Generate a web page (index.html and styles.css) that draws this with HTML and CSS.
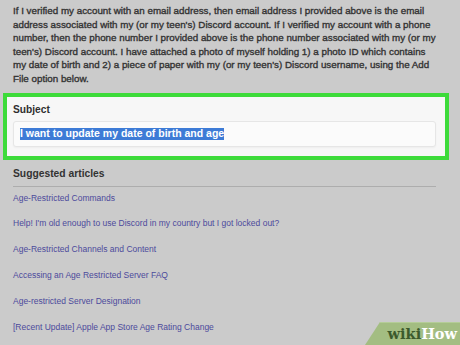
FILE: index.html
```html
<!DOCTYPE html>
<html lang="en">
<head>
    <meta charset="UTF-8">
    <title>Submit a request</title>
    <link rel="stylesheet" href="styles.css">
</head>
<body>
    <div class="page">
        <p class="consent">If I verified my account with an email address, then email address I provided above is the email address associated with my (or my teen's) Discord account. If I verified my account with a phone number, then the phone number I provided above is the phone number associated with my (or my teen's) Discord account. I have attached a photo of myself holding 1) a photo ID which contains my date of birth and 2) a piece of paper with my (or my teen's) Discord username, using the Add File option below.</p>

        <div class="highlight">
            <label class="field-label">Subject</label>
            <div class="input"><span class="selected">I want to update my date of birth and age</span></div>
        </div>

        <div class="suggested">
            <h2>Suggested articles</h2>
            <ul class="articles">
                <li><a href="#">Age-Restricted Commands</a></li>
                <li><a href="#">Help! I'm old enough to use Discord in my country but I got locked out?</a></li>
                <li><a href="#">Age-Restricted Channels and Content</a></li>
                <li><a href="#">Accessing an Age Restricted Server FAQ</a></li>
                <li><a href="#">Age-restricted Server Designation</a></li>
                <li><a href="#">[Recent Update] Apple App Store Age Rating Change</a></li>
            </ul>
        </div>
    </div>

    <div class="wikihow"><span class="wiki">wiki</span><span class="how">How</span></div>
</body>
</html>
```

FILE: styles.css
```css
html, body {
    margin: 0;
    height: 100%;
}
body {
    background-color: #cbcbcb;
    font-family: "Liberation Sans", Arial, sans-serif;
    color: #333;
    overflow: hidden;
    position: relative;
}
.page {
    padding-top: 4px;
}
.consent {
    margin: 0 21px 0 13px;
    font-size: 9.8px;
    line-height: 13.6px;
    color: #333;
    -webkit-text-stroke: 0.35px #333;
}
.highlight {
    margin: 7px 11px 0 3px;
    border: 4px solid #3ddb3a;
    background: #f7f7f7;
    padding: 6px 9px 9px 6px;
}
.field-label {
    display: block;
    font-size: 10.2px;
    line-height: 14px;
    font-weight: bold;
    color: #2e2e2e;
    margin-bottom: 4px;
}
.input {
    background: #fbfbfb;
    border: 1px solid #e6e6e6;
    border-radius: 3px;
    box-shadow: 0 1px 2px rgba(0,0,0,0.04);
    height: 24px;
    display: flex;
    align-items: center;
    padding-left: 6px;
}
.selected {
    background: #3d7bd6;
    color: #fff;
    font-size: 10.5px;
    line-height: 11px;
    padding-bottom: 1px;
    font-weight: bold;
}
.suggested {
    margin: 0 24px 0 13px;
}
.suggested h2 {
    font-size: 10.3px;
    line-height: 14px;
    font-weight: bold;
    color: #333;
    margin: 7px 0 0 0;
    padding-bottom: 5px;
    border-bottom: 1px solid #adadad;
}
.articles {
    list-style: none;
    margin: 0;
    padding: 5px 0 0 0;
}
.articles li {
    height: 25.8px;
    font-size: 8.5px;
    line-height: 12px;
}
.articles a {
    color: #4b4a9c;
    text-decoration: none;
}
.wikihow {
    position: absolute;
    right: 0;
    bottom: 0;
    width: 95px;
    height: 23px;
    background: #a3bd82;
    border-top: 1px solid #b5cd98;
    clip-path: polygon(15px 0, 100% 0, 100% 100%, 0 100%);
    font-family: "DejaVu Serif", "Liberation Serif", serif;
    font-weight: bold;
    font-size: 14.5px;
    line-height: 22px;
    text-align: right;
    padding-right: 3px;
    box-sizing: border-box;
}
.wiki {
    color: #3c5a2c;
}
.how {
    color: #fff;
}
```
